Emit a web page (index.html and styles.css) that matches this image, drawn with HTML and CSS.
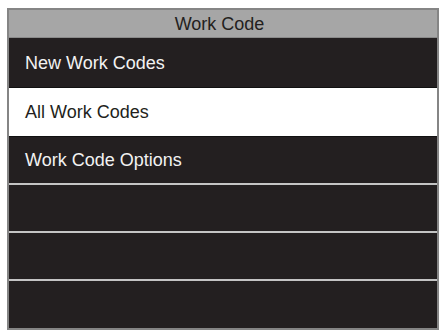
FILE: index.html
```html
<!DOCTYPE html>
<html lang="en">
<head>
  <meta charset="UTF-8">
  <meta name="viewport" content="width=device-width, initial-scale=1.0">
  <title>Work Code</title>
  <link rel="stylesheet" href="styles.css">
</head>
<body>

  <div class="screen">
    <div class="title-bar">Work Code</div>

    <ul class="menu">
      <li class="menu-item first">New Work Codes</li>
      <li class="menu-item active">All Work Codes</li>
      <li class="menu-item divided">Work Code Options</li>
      <li class="menu-item divided"></li>
      <li class="menu-item divided"></li>
      <li class="menu-item last"></li>
    </ul>
  </div>

</body>
</html>
```

FILE: styles.css
```css
body {
  background-color: #FFF;
  font-family: "Liberation Sans", Arial, sans-serif;
  margin: 0;
  padding: 0;
}

.screen {
  margin: 8px 0 0 7px;
  width: 428px;
  height: 318px;
  border: 2px solid #858585;
  background-color: #231f20;
  display: flex;
  flex-direction: column;
}

.title-bar {
  height: 28px;
  line-height: 28px;
  background-color: #a6a6a6;
  color: #231f20;
  font-size: 18px;
  text-align: center;
  padding-right: 7px;
  border-bottom: 1px solid #8a8a8a;
  box-sizing: border-box;
}

.menu {
  list-style: none;
  margin: 0;
  padding: 0;
  flex: 1;
  display: flex;
  flex-direction: column;
}

.menu-item {
  height: 49px;
  line-height: 49px;
  padding-left: 16px;
  font-size: 18px;
  color: #f2f2f2;
  background-color: #231f20;
}

.first {
  padding-top: 2px;
  height: 47px;
  line-height: 47px;
}

.active {
  height: 50px;
  line-height: 48px;
  background-color: #FFF;
  color: #231f20;
  border-top: 1px solid #111;
  border-bottom: 1px solid #111;
  box-sizing: border-box;
}

.divided {
  height: 46px;
  line-height: 46px;
  border-bottom: 2px solid #c4c4c4;
}

.last {
  flex: 1;
}
```
